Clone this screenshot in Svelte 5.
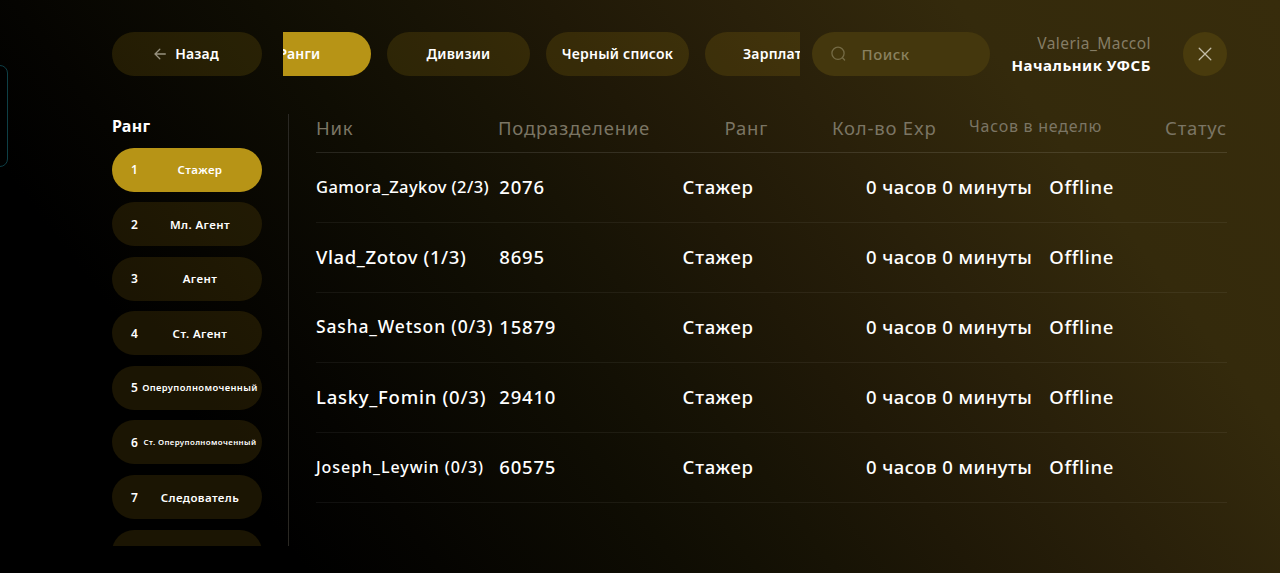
<script lang="ts">
    type Rank = { id: number; name: string; size?: number };
    type Member = { nick: string; exp: string; size: number; spacing: number };

    const tabs = ['Ранги', 'Дивизии', 'Черный список', 'Зарплата'];

    const columns = [
        { title: 'Ник', width: 182 },
        { title: 'Подразделение', width: 226.5 },
        { title: 'Ранг', width: 107.5 },
        { title: 'Кол-во Exp', width: 137 },
        { title: 'Часов в неделю', width: 196, small: true },
        { title: 'Статус', width: 62 },
    ];

    const ranks: Rank[] = [
        { id: 1, name: 'Стажер' },
        { id: 2, name: 'Мл. Агент' },
        { id: 3, name: 'Агент' },
        { id: 4, name: 'Ст. Агент' },
        { id: 5, name: 'Оперуполномоченный', size: 9.4 },
        { id: 6, name: 'Ст. Оперуполномоченный', size: 7.9 },
        { id: 7, name: 'Следователь' },
        { id: 8, name: '' },
    ];

    // long nicks get a smaller size so they stay inside their column
    const members: Member[] = [
        { nick: 'Gamora_Zaykov (2/3)', exp: '2076', size: 16.5, spacing: 0.4 },
        { nick: 'Vlad_Zotov (1/3)', exp: '8695', size: 18.5, spacing: 0.6 },
        { nick: 'Sasha_Wetson (0/3)', exp: '15879', size: 17.5, spacing: 0.85 },
        { nick: 'Lasky_Fomin (0/3)', exp: '29410', size: 18.5, spacing: 0.75 },
        { nick: 'Joseph_Leywin (0/3)', exp: '60575', size: 16, spacing: 0.95 },
    ];

    let activeTab = $state('Ранги');
    let activeRank = $state(1);
</script>

<div class="screen">
    <div class="edge-panel"></div>

    <header class="header">
        <button class="pill back">
            <svg width="12" height="12" viewBox="0 0 12 12">
                <path d="M11.3 6H1M5.8 1.2L1 6l4.8 4.8" />
            </svg>
            Назад
        </button>
        <nav class="tabs">
            <div class="tabs__track">
                {#each tabs as tab}
                    <button
                        class="pill tab"
                        class:is-active={tab === activeTab}
                        onclick={() => (activeTab = tab)}
                    >
                        {tab}
                    </button>
                {/each}
            </div>
        </nav>
        <label class="search">
            <svg width="16" height="16" viewBox="0 0 16 16">
                <circle cx="7" cy="7.3" r="6.1" />
                <path d="M11.5 11.7l2.1 2.3" />
            </svg>
            <input type="text" placeholder="Поиск" />
        </label>
        <div class="user">
            <span class="user__name">Valeria_Maccol</span>
            <span class="user__role">Начальник УФСБ</span>
        </div>
        <button class="close" aria-label="Закрыть">
            <svg width="14" height="14" viewBox="0 0 14 14">
                <path d="M1.2 1.2l11.6 11.6M12.8 1.2L1.2 12.8" />
            </svg>
        </button>
    </header>

    <main class="content">
        <aside class="sidebar">
            <h2 class="sidebar__title">Ранг</h2>
            <div class="ranks">
                {#each ranks as rank}
                    <button
                        class="rank"
                        class:is-active={rank.id === activeRank}
                        onclick={() => (activeRank = rank.id)}
                    >
                        <span class="rank__id">{rank.name ? rank.id : ''}</span>
                        <span class="rank__name" style:font-size={rank.size ? `${rank.size}px` : null}>
                            {rank.name}
                        </span>
                    </button>
                {/each}
            </div>
        </aside>

        <section class="table">
            <div class="table__head">
                {#each columns as column}
                    <div class:is-small={column.small} style:width="{column.width}px">{column.title}</div>
                {/each}
            </div>
            {#each members as member}
                <div class="table__row">
                    <div style:font-size="{member.size}px" style:letter-spacing="{member.spacing}px">{member.nick}</div>
                    <div class="exp">{member.exp}</div>
                    <div>Стажер</div>
                    <div class="time">0 часов 0 минуты</div>
                    <div>Offline</div>
                </div>
            {/each}
        </section>
    </main>
</div>

<style>
    :global(body) {
        background: #000;
    }

    .screen {
        position: relative;
        box-sizing: border-box;
        width: 1280px;
        height: 573px;
        padding: 32px 53px 27px 112px;
        overflow: hidden;
        background: linear-gradient(53deg, #000 18%, #050401 26%, #0f0d03 40%, #171305 49%, #1f1807 57%, #29200a 68%, #342a0c 81%, #372c0c 100%);
        color: #fff;
        font-family: 'Noto Sans', sans-serif;
    }

    button {
        padding: 0;
        border: none;
        color: inherit;
        font: inherit;
        cursor: pointer;
    }

    svg {
        flex: none;
        fill: none;
        stroke: currentColor;
        stroke-width: 1.3;
        stroke-linecap: round;
    }

    .edge-panel {
        position: absolute;
        top: 65px;
        left: -20px;
        width: 26px;
        height: 100px;
        border: 1px solid #0e3f46;
        border-radius: 8px;
        background: #000;
    }

    .header {
        display: flex;
        height: 44px;
    }

    .pill {
        display: flex;
        flex: none;
        align-items: center;
        justify-content: center;
        box-sizing: border-box;
        height: 44px;
        padding-bottom: 1px;
        border-radius: 22px;
        background: rgba(180, 143, 20, .17);
        font-size: 14px;
        font-weight: 600;
        letter-spacing: .2px;
        white-space: nowrap;
    }

    .back {
        width: 150px;
        padding-right: 1px;
        gap: 9px;
    }

    .back svg {
        color: #98927f;
    }

    .tabs {
        width: 517px;
        margin-left: 21px;
        overflow: hidden;
    }

    .tabs__track {
        display: flex;
        gap: 16px;
        margin-left: -55px;
    }

    .tab {
        width: 143px;
    }

    .is-active {
        background: #b79416;
    }

    .search {
        display: flex;
        box-sizing: border-box;
        align-items: center;
        width: 178px;
        height: 44px;
        margin-left: 12px;
        padding-left: 19px;
        border-radius: 22px;
        background: #44370d;
        color: #756b45;
    }

    .search input {
        width: 110px;
        margin-left: 14.5px;
        padding: 0 0 1px;
        border: none;
        outline: none;
        background: none;
        color: #fff;
        font: 500 15px 'Noto Sans', sans-serif;
        letter-spacing: .5px;
    }

    .search input::placeholder {
        color: #8a815f;
    }

    .user {
        display: flex;
        flex-direction: column;
        align-items: flex-end;
        width: 161px;
        line-height: 22px;
        white-space: nowrap;
    }

    .user__name {
        color: #857d65;
        font-size: 15.5px;
        letter-spacing: .45px;
    }

    .user__role {
        font-size: 15px;
        font-weight: 700;
        letter-spacing: .5px;
    }

    .close {
        display: flex;
        align-items: center;
        justify-content: center;
        width: 44px;
        height: 44px;
        margin-left: 32px;
        border-radius: 50%;
        background: #493b0d;
        color: #c3bda8;
    }

    .content {
        display: flex;
        height: 432px;
        margin-top: 38px;
    }

    .sidebar {
        display: flex;
        box-sizing: border-box;
        flex-direction: column;
        width: 177px;
        border-right: 1px solid #2a2823;
    }

    .sidebar__title {
        height: 33.5px;
        margin: 0;
        font-size: 16px;
        font-weight: 700;
        letter-spacing: .3px;
        line-height: 25px;
    }

    .ranks {
        display: flex;
        flex: 1;
        flex-direction: column;
        gap: 10.6px;
        width: 150px;
        min-height: 0;
        overflow: hidden;
    }

    .rank {
        display: flex;
        flex: none;
        align-items: center;
        height: 44px;
        padding: 0 4px 0 19px;
        border-radius: 22px;
        background: rgba(180, 143, 20, .15);
        font-size: 11.5px;
        font-weight: 600;
    }

    .rank.is-active {
        background: #b79416;
    }

    .rank__id {
        width: 11px;
        font-size: 12px;
        text-align: left;
    }

    .rank__name {
        flex: 1;
        text-align: center;
        letter-spacing: .4px;
        white-space: nowrap;
    }

    .table {
        width: 911px;
        margin-left: 27px;
    }

    .table__head {
        display: flex;
        box-sizing: border-box;
        height: 38.5px;
        border-bottom: 1px solid rgba(255, 255, 255, .11);
        color: #7b7564;
        font-size: 18.5px;
        letter-spacing: .8px;
        line-height: 27px;
        white-space: nowrap;
    }

    .is-small {
        font-size: 16px;
        letter-spacing: .75px;
        line-height: 24.5px;
    }

    .table__row {
        display: grid;
        box-sizing: border-box;
        grid-template-columns: repeat(5, 183.3px);
        align-items: center;
        height: 70.1px;
        padding-bottom: 1.5px;
        border-bottom: 1px solid rgba(255, 255, 255, .06);
        font-size: 18.5px;
        font-weight: 500;
        letter-spacing: .7px;
        white-space: nowrap;
    }

    .exp {
        letter-spacing: .8px;
    }

    .time {
        letter-spacing: .45px;
    }
</style>
